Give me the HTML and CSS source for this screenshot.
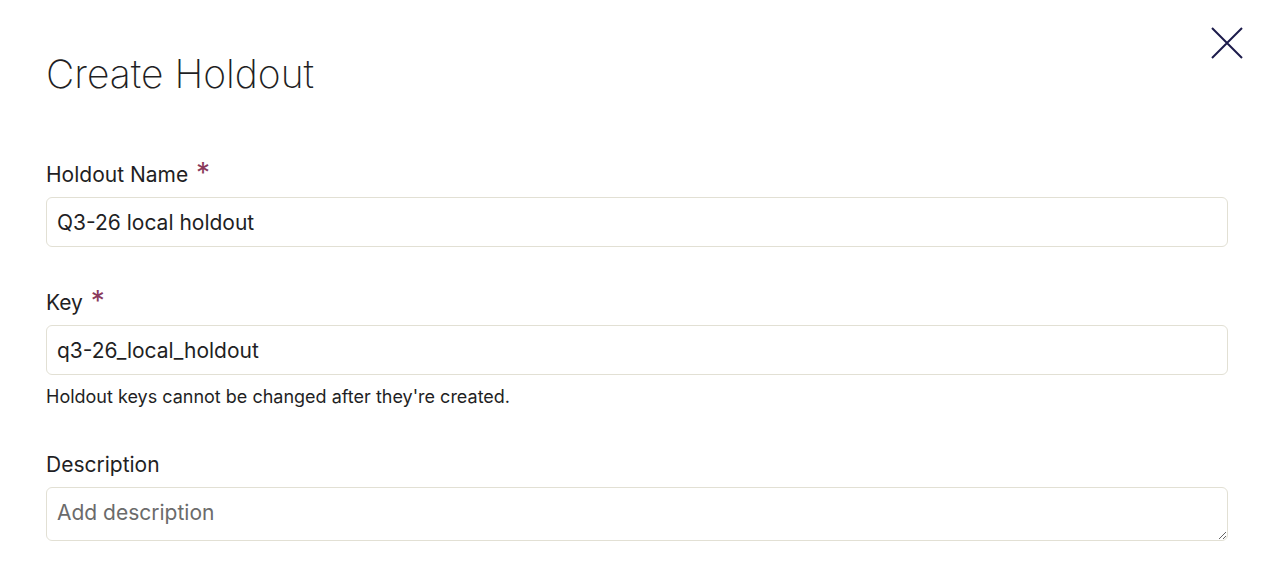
FILE: index.html
```html
<!DOCTYPE html>
<html lang="en">
<head>
<meta charset="utf-8">
<title>Create Holdout</title>
<link rel="stylesheet" href="styles.css">
</head>
<body>
<div class="modal">
  <button class="close" aria-label="Close">
    <svg width="32" height="32" viewBox="0 0 32 32"><path d="M1 1L31 31M31 1L1 31" stroke="#1c1b4b" stroke-width="2" fill="none"/></svg>
  </button>
  <h1 class="title">Create Holdout</h1>
  <form class="form">
    <div class="field">
      <label class="label">Holdout Name <span class="req">*</span></label>
      <input class="input" type="text" value="Q3-26 local holdout">
    </div>
    <div class="field">
      <label class="label">Key <span class="req">*</span></label>
      <input class="input" type="text" value="q3-26_local_holdout">
      <p class="help">Holdout keys cannot be changed after they're created.</p>
    </div>
    <div class="field">
      <label class="label">Description</label>
      <textarea class="textarea" placeholder="Add description"></textarea>
    </div>
  </form>
</div>
</body>
</html>
```
FILE: styles.css
```css
* { box-sizing: border-box; }
html, body { margin: 0; background: #fff; }
body { font-family: Inter, "Noto Sans", sans-serif; color: #1f1f24; }
.modal { position: relative; padding: 50px 58px 0 46px; }
.close {
  position: absolute; top: 27px; right: 43px;
  width: 32px; height: 32px; padding: 0; border: 0; background: none; cursor: pointer;
}
.close svg { display: block; }
.title {
  margin: 0; font-size: 39px; line-height: 48px; font-weight: 200; color: #1f1f24;
}
.form { display: flex; flex-direction: column; gap: 44px; margin-top: 65px; }
.field { display: flex; flex-direction: column; }
.label { font-size: 21px; line-height: 24px; margin-bottom: 10px; color: #1f1f24; }
.req { color: #8a3a5c; font-size: 28px; line-height: 0; margin-left: 2px; position: relative; top: 1px; }
.input, .textarea {
  font-family: inherit; font-size: 21px; color: #1f1f24;
  border: 1px solid #e2e0d4; border-radius: 6px; background: #fff;
  padding: 0 10px; height: 50px; width: 100%; outline: none;
}
.textarea { height: 54px; padding: 12px 10px; line-height: 26px; resize: vertical; display: block; }
.textarea::placeholder { color: #6b6b6b; }
.help { margin: 11px 0 1px; font-size: 18px; line-height: 22px; color: #1f1f24; }
```
